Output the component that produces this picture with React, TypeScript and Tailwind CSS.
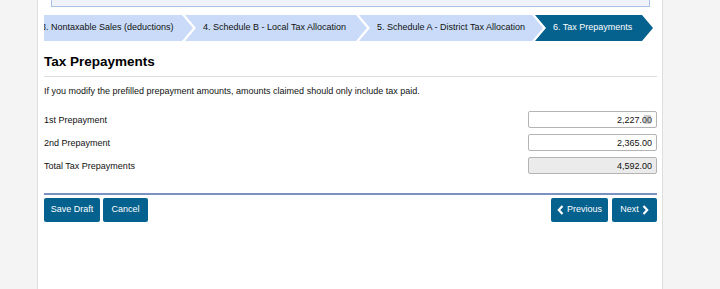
import React from "react";

const steps = [
  { label: "3. Nontaxable Sales (deductions)", width: "w-[170px]", first: true },
  { label: "4. Schedule B - Local Tax Allocation", width: "w-[182px]" },
  { label: "5. Schedule A - District Tax Allocation", width: "w-[184px]" },
  { label: "6. Tax Prepayments", width: "w-[118px]", active: true },
];

const rows = [
  { label: "1st Prepayment", value: "2,227.00", cursor: true },
  { label: "2nd Prepayment", value: "2,365.00" },
  { label: "Total Tax Prepayments", value: "4,592.00", total: true },
];

const Chevron = ({ dir }: { dir: "left" | "right" }) => (
  <svg width="7" height="10" viewBox="0 0 7 10" className="shrink-0">
    <polyline
      points={dir === "left" ? "5.5,1 1.8,5 5.5,9" : "1.5,1 5.2,5 1.5,9"}
      fill="none"
      stroke="white"
      strokeWidth="2.2"
    />
  </svg>
);

export default function App() {
  return (
    <div className="min-h-[289px] bg-[#f4f4f4] font-['Liberation_Sans',Arial,sans-serif] text-[#111]">
      <div className="ml-[37px] min-h-[289px] w-[626px] border-x border-[#dedede] bg-white pl-[6px] pr-[5px]">
        {/* notice box, cut off at the top */}
        <div className="ml-[7px] h-[7px] w-[599px] border-x border-b border-[#a9c3e6] bg-[#eff3f9]" />

        {/* step breadcrumb */}
        <div className="mt-[8px] flex h-[26px] overflow-hidden">
          {steps.map((s) => (
            <div
              key={s.label}
              className={`${s.width} ${s.first ? "-ml-[21px]" : "-ml-[8px]"} ${
                s.active ? "bg-[#05628e] text-white" : "bg-[#c9dbf8] text-[#111]"
              } flex h-full shrink-0 items-center whitespace-nowrap pl-[18px] text-[9px] [clip-path:polygon(0_0,calc(100%_-_11px)_0,100%_50%,calc(100%_-_11px)_100%,0_100%,11px_50%)]`}
            >
              {s.label}
            </div>
          ))}
        </div>

        <h1 className="mt-[13px] text-[13.5px] font-bold leading-[16px] text-black">Tax Prepayments</h1>
        <div className="mt-[6px] h-px bg-[#dddddd]" />

        <p className="mt-[8px] text-[9px] leading-[12px]">
          If you modify the prefilled prepayment amounts, amounts claimed should only include tax paid.
        </p>

        <div className="mt-[14px] flex flex-col gap-[6px]">
          {rows.map((r) => (
            <div key={r.label} className="flex h-[17px] items-center justify-between">
              <span className="text-[9px] leading-[12px]">{r.label}</span>
              <div className="relative flex h-[17px]">
                <input
                  readOnly
                  value={r.value}
                  className={`block h-[17px] w-[129px] rounded-[2px] border border-[#b4b4b4] pr-[4px] text-right text-[9px] leading-[15px] text-[#111] outline-none ${
                    r.total ? "bg-[#ebebeb]" : "bg-white"
                  }`}
                />
                {r.cursor && (
                  <span className="pointer-events-none absolute right-[6px] top-[4px] h-[9px] w-[7px] rounded-[1px] bg-[#808080]/40" />
                )}
              </div>
            </div>
          ))}
        </div>

        <div className="mt-[19px] h-[2px] bg-[#7b91c1]" />

        <div className="mt-[3px] flex items-center justify-between">
          <div className="flex gap-[3px]">
            <button className="h-[24px] w-[56px] rounded-[2px] bg-[#05628e] text-[9px] text-white">Save Draft</button>
            <button className="h-[24px] w-[45px] rounded-[2px] bg-[#05628e] text-[9px] text-white">Cancel</button>
          </div>
          <div className="flex gap-[4px]">
            <button className="flex h-[24px] w-[57px] items-center justify-center gap-[3px] rounded-[2px] bg-[#05628e] text-[9px] text-white">
              <Chevron dir="left" />
              Previous
            </button>
            <button className="flex h-[24px] w-[45px] items-center justify-center gap-[3px] rounded-[2px] bg-[#05628e] text-[9px] text-white">
              Next
              <Chevron dir="right" />
            </button>
          </div>
        </div>
      </div>
    </div>
  );
}
